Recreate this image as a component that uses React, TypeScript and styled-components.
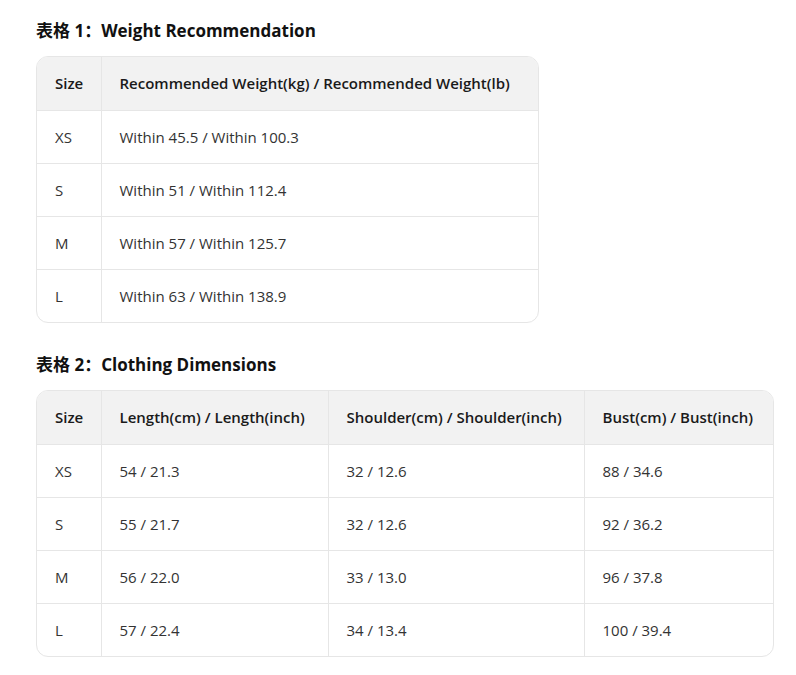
import React from "react";
import styled, { createGlobalStyle } from "styled-components";

const Global = createGlobalStyle`
  *, *::before, *::after { box-sizing: border-box; }
  html, body { margin: 0; padding: 0; background: #ffffff; }
  body { font-family: "Open Sans", "Noto Sans", "Noto Sans CJK SC", sans-serif; color: #333; }
`;

const Page = styled.div`
  padding: 19px 0 0 36px;
  display: flex;
  flex-direction: column;
`;

const Title = styled.h3`
  margin: 0 0 13px 0;
  font-size: 17px;
  line-height: 24px;
  font-weight: 700;
  color: #111;
  font-family: "Open Sans", "Noto Sans CJK SC", sans-serif;
`;

const TableWrap = styled.div<{ $w: number; $mb: number }>`
  width: ${(p) => p.$w}px;
  border: 1px solid #e6e6e6;
  border-radius: 12px;
  overflow: hidden;
  margin-bottom: ${(p) => p.$mb}px;
`;

const Table = styled.table`
  width: 100%;
  border-collapse: collapse;
  table-layout: fixed;
`;

const HeadCell = styled.th<{ $w?: number }>`
  ${(p) => (p.$w ? `width: ${p.$w}px;` : "")}
  background: #f2f2f2;
  height: 53px;
  padding: 0 0 0 18px;
  text-align: left;
  font-size: 15px;
  font-weight: 600;
  color: #1a1a1a;
  border-left: 1px solid #e6e6e6;
  border-bottom: 1px solid #e6e6e6;
  white-space: nowrap;
  &:first-child { border-left: none; }
`;

const Cell = styled.td`
  height: 53px;
  padding: 0 0 0 18px;
  font-size: 15px;
  color: #333;
  border-left: 1px solid #e6e6e6;
  border-top: 1px solid #e6e6e6;
  white-space: nowrap;
  &:first-child { border-left: none; }
`;

const Row = styled.tr`
  &:first-child td { border-top: none; }
`;

const t1 = {
  cols: [
    { label: "Size", w: 64 },
    { label: "Recommended Weight(kg) / Recommended Weight(lb)" },
  ],
  rows: [
    ["XS", "Within 45.5 / Within 100.3"],
    ["S", "Within 51 / Within 112.4"],
    ["M", "Within 57 / Within 125.7"],
    ["L", "Within 63 / Within 138.9"],
  ],
};

const t2 = {
  cols: [
    { label: "Size", w: 64 },
    { label: "Length(cm) / Length(inch)", w: 227 },
    { label: "Shoulder(cm) / Shoulder(inch)", w: 256 },
    { label: "Bust(cm) / Bust(inch)" },
  ],
  rows: [
    ["XS", "54 / 21.3", "32 / 12.6", "88 / 34.6"],
    ["S", "55 / 21.7", "32 / 12.6", "92 / 36.2"],
    ["M", "56 / 22.0", "33 / 13.0", "96 / 37.8"],
    ["L", "57 / 22.4", "34 / 13.4", "100 / 39.4"],
  ],
};

type Spec = { cols: { label: string; w?: number }[]; rows: string[][] };

function DataTable({ spec, width, mb }: { spec: Spec; width: number; mb: number }) {
  return (
    <TableWrap $w={width} $mb={mb}>
      <Table>
        <thead>
          <tr>
            {spec.cols.map((c) => (
              <HeadCell key={c.label} $w={c.w}>
                {c.label}
              </HeadCell>
            ))}
          </tr>
        </thead>
        <tbody>
          {spec.rows.map((r) => (
            <Row key={r[0]}>
              {r.map((v, i) => (
                <Cell key={i}>{v}</Cell>
              ))}
            </Row>
          ))}
        </tbody>
      </Table>
    </TableWrap>
  );
}

export default function App() {
  return (
    <>
      <Global />
      <Page>
        <Title>表格 1：Weight Recommendation</Title>
        <DataTable spec={t1} width={503} mb={30} />
        <Title>表格 2：Clothing Dimensions</Title>
        <DataTable spec={t2} width={738} mb={20} />
      </Page>
    </>
  );
}
